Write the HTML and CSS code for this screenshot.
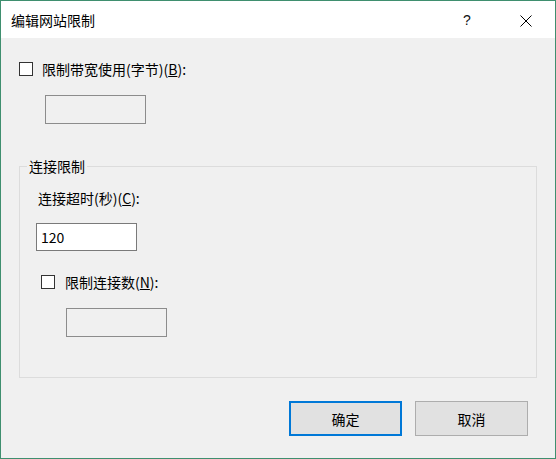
FILE: index.html
```html
<!DOCTYPE html>
<html>
<head>
<meta charset="utf-8">
<link rel="stylesheet" href="styles.css">
</head>
<body>
<div class="window">
  <div class="titlebar">
    <span class="title">编辑网站限制</span>
    <span class="help">?</span>
    <span class="close">
      <svg width="12" height="12" viewBox="0 0 12 12"><path d="M0.5 0.5L11.5 11.5M11.5 0.5L0.5 11.5" stroke="#000" stroke-width="1" fill="none"/></svg>
    </span>
  </div>
  <div class="content">
    <div class="row row-bw">
      <span class="checkbox"></span>
      <span class="label">限制带宽使用(字节)(<u>B</u>):</span>
    </div>
    <div class="textbox disabled tb-bw"></div>
    <fieldset class="group">
      <legend class="legend">连接限制</legend>
      <div class="row row-timeout">
        <span class="label">连接超时(秒)(<u>C</u>):</span>
      </div>
      <div class="textbox tb-timeout"><span class="value">120</span></div>
      <div class="row row-conn">
        <span class="checkbox"></span>
        <span class="label">限制连接数(<u>N</u>):</span>
      </div>
      <div class="textbox disabled tb-conn"></div>
    </fieldset>
    <div class="buttons">
      <div class="btn btn-default">确定</div>
      <div class="btn">取消</div>
    </div>
  </div>
</div>
</body>
</html>
```
FILE: styles.css
```css
* { box-sizing: border-box; }
html, body { margin: 0; padding: 0; }
body {
  font-family: "Noto Sans CJK SC", "Noto Sans", sans-serif;
  font-size: 14px;
  color: #000;
  background: #f0f0f0;
}
.window {
  width: 556px;
  height: 459px;
  border: 1px solid #3f8f6f;
  background: #f0f0f0;
  display: flex;
  flex-direction: column;
}
.titlebar {
  height: 37px;
  background: #fff;
  display: flex;
  align-items: center;
  padding-left: 10px;
  flex-shrink: 0;
}
.title {
  flex: 1;
  line-height: 20px;
  font-size: 14px;
  margin-top: 1px;
}
.help {
  width: 14px;
  font-size: 14px;
  line-height: 20px;
  margin-right: 43px;
  color: #111;
  font-family: "Liberation Sans", sans-serif;
  font-weight: normal;
}
.close {
  display: flex;
  width: 12px;
  height: 12px;
  margin-right: 23px;
  margin-top: 2px;
}
.content {
  flex: 1;
  padding: 21px 18px 0 18px;
  display: flex;
  flex-direction: column;
}
.row {
  display: flex;
  align-items: center;
  height: 20px;
  line-height: 20px;
}
.checkbox {
  width: 14px;
  height: 14px;
  border: 1px solid #333;
  background: #fff;
  flex-shrink: 0;
}
.label { white-space: nowrap; }
.row-bw .label { margin-left: 9px; }
.textbox {
  width: 101px;
  height: 29px;
  border: 1px solid #7a7a7a;
  background: #fff;
  display: flex;
  align-items: center;
}
.textbox.disabled {
  background: #f0f0f0;
  border-color: #8c8c8c;
}
.tb-bw { margin-top: 16px; margin-left: 26px; }
.group {
  margin: 32px 0 0 0;
  padding: 0 0 40px 0;
  border: 1px solid #dcdcdc;
  width: 518px;
  min-width: 0;
}
.legend {
  padding: 0 2px;
  margin-left: 7px;
  line-height: 20px;
}
.row-timeout { margin-top: 12px; margin-left: 18px; }
.tb-timeout { margin-top: 15px; margin-left: 16px; height: 28px; }
.value { padding-left: 4px; line-height: 20px; }
.row-conn { margin-top: 21px; margin-left: 21px; }
.row-conn .label { margin-left: 10px; }
.tb-conn { margin-top: 16px; margin-left: 46px; }
.buttons {
  display: flex;
  justify-content: flex-end;
  gap: 13px;
  margin-top: 23px;
  padding-right: 9px;
}
.btn {
  width: 113px;
  height: 35px;
  border: 1px solid #adadad;
  background: #e1e1e1;
  display: flex;
  align-items: center;
  justify-content: center;
  line-height: 20px;
}
.btn-default {
  border: 2px solid #0078d7;
}
```
